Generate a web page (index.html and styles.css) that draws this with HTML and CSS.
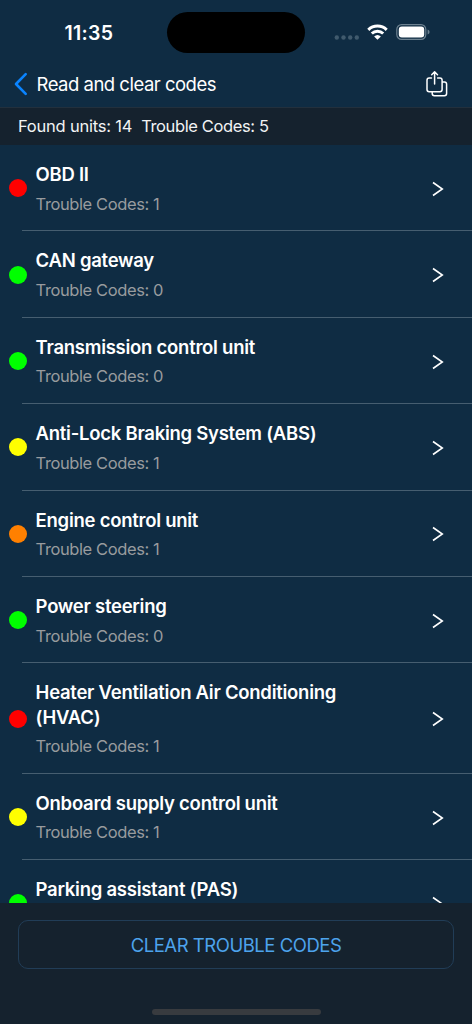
FILE: index.html
```html
<!DOCTYPE html>
<html lang="en">
<head>
<meta charset="utf-8">
<title>Read and clear codes</title>
<link rel="stylesheet" href="styles.css">
</head>
<body>
<div class="phone">
  <header class="status">
    <span class="time">11:35</span>
    <span class="island"></span>
    <svg class="indicators" width="100" height="24" viewBox="0 0 100 24">
      <g fill="#405a6d"><circle cx="5.8" cy="16.5" r="2.2"/><circle cx="12.5" cy="16.5" r="2.2"/><circle cx="19.2" cy="16.5" r="2.2"/><circle cx="25.8" cy="16.5" r="2.2"/></g>
      <g fill="none" stroke="#fff" stroke-width="3"><path d="M37.3 8.8a13.2 13.2 0 0 1 18.4 0"/><path d="M40.8 12.5a8.2 8.2 0 0 1 11.4 0"/></g>
      <path d="M43.1 15.5a5 5 0 0 1 6.8 0L46.5 18.8z" fill="#fff"/>
      <rect x="65.8" y="3.6" width="29" height="14.8" rx="4.8" fill="none" stroke="#6c8190" stroke-width="1.2"/>
      <rect x="67.8" y="5.6" width="25.4" height="10.8" rx="3" fill="#fff"/>
      <path d="M96.6 8.5q2 .6 2 2.5t-2 2.5z" fill="#6c8190"/>
    </svg>
  </header>
  <nav class="nav">
    <svg class="back" width="14" height="24" viewBox="0 0 14 24"><path d="M11.7 2.2 2 12l9.7 9.8" fill="none" stroke="#0a84ff" stroke-width="2.6" stroke-linecap="round" stroke-linejoin="round"/></svg>
    <h1 class="title">Read and clear codes</h1>
    <svg class="share" width="24" height="28" viewBox="0 0 24 28" fill="none" stroke="#fff" stroke-width="1.5" stroke-linecap="round" stroke-linejoin="round"><path d="M6.5 8H4.2Q2 8 2 10.2v9.4q0 2.2 2.2 2.2h10.7q2.2 0 2.2-2.2v-9.4Q17.1 8 14.9 8h-2.3M9.6 14V2M6.7 4.7 9.6 1.8l2.9 2.9M7.2 22v1.6q0 2.2 2.2 2.2h10q2.2 0 2.2-2.2v-9.4q0-2.2-2.2-2.2h-2.2"/></svg>
  </nav>
  <div class="summary"><span>Found units: 14</span><span class="total">Trouble Codes: 5</span></div>
  <main class="list">
    <article class="row"><i class="dot red"></i><div class="text"><h2 class="name">OBD II</h2><p class="codes">Trouble Codes: 1</p></div><svg class="chevron" viewBox="0 0 12 16"><path d="M1 1.5 10.3 8 1 14.5"/></svg></article>
    <article class="row"><i class="dot green"></i><div class="text"><h2 class="name">CAN gateway</h2><p class="codes">Trouble Codes: 0</p></div><svg class="chevron" viewBox="0 0 12 16"><path d="M1 1.5 10.3 8 1 14.5"/></svg></article>
    <article class="row"><i class="dot green"></i><div class="text"><h2 class="name">Transmission control unit</h2><p class="codes">Trouble Codes: 0</p></div><svg class="chevron" viewBox="0 0 12 16"><path d="M1 1.5 10.3 8 1 14.5"/></svg></article>
    <article class="row"><i class="dot yellow"></i><div class="text"><h2 class="name">Anti-Lock Braking System (ABS)</h2><p class="codes">Trouble Codes: 1</p></div><svg class="chevron" viewBox="0 0 12 16"><path d="M1 1.5 10.3 8 1 14.5"/></svg></article>
    <article class="row"><i class="dot orange"></i><div class="text"><h2 class="name">Engine control unit</h2><p class="codes">Trouble Codes: 1</p></div><svg class="chevron" viewBox="0 0 12 16"><path d="M1 1.5 10.3 8 1 14.5"/></svg></article>
    <article class="row"><i class="dot green"></i><div class="text"><h2 class="name">Power steering</h2><p class="codes">Trouble Codes: 0</p></div><svg class="chevron" viewBox="0 0 12 16"><path d="M1 1.5 10.3 8 1 14.5"/></svg></article>
    <article class="row"><i class="dot red"></i><div class="text"><h2 class="name">Heater Ventilation Air Conditioning<br>(HVAC)</h2><p class="codes">Trouble Codes: 1</p></div><svg class="chevron" viewBox="0 0 12 16"><path d="M1 1.5 10.3 8 1 14.5"/></svg></article>
    <article class="row"><i class="dot yellow"></i><div class="text"><h2 class="name">Onboard supply control unit</h2><p class="codes">Trouble Codes: 1</p></div><svg class="chevron" viewBox="0 0 12 16"><path d="M1 1.5 10.3 8 1 14.5"/></svg></article>
    <article class="row"><i class="dot green"></i><div class="text"><h2 class="name">Parking assistant (PAS)</h2></div><svg class="chevron" viewBox="0 0 12 16"><path d="M1 1.5 10.3 8 1 14.5"/></svg></article>
  </main>
  <footer class="footer">
    <button class="clear">CLEAR TROUBLE CODES</button>
    <span class="home"></span>
  </footer>
</div>
</body>
</html>
```
FILE: styles.css
```css
* { box-sizing: border-box; }
body { margin: 0; background: #0f2c43; color: #fff; font-family: Inter, "Liberation Sans", sans-serif; }
h1, h2, p { margin: 0; }
svg { display: block; flex: none; }
.phone { display: flex; flex-direction: column; width: 472px; height: 1024px; overflow: hidden; }
.status { display: grid; grid-template-columns: 167px 138px 1fr; height: 60px; padding-top: 12px; }
.time { padding-left: 64.5px; font-size: 19.5px; line-height: 42px; font-weight: 600; letter-spacing: .3px; }
.island { height: 41px; border-radius: 21px; background: #000; }
.indicators { margin: 9px 0 0 26px; }
.nav { display: flex; align-items: center; height: 47px; padding: 0 23px 0 14px; }
.title { flex: 1; margin-left: 8.5px; font-size: 18.5px; line-height: 24px; font-weight: 400; letter-spacing: -.5px; }
.summary { display: flex; gap: 9px; height: 38px; padding-left: 18px; border-top: 1px solid #22303d; background: #15222e; font-size: 16.5px; line-height: 37px; letter-spacing: -.22px; color: #f2f3f4; }
.total { letter-spacing: -.38px; }
.list { flex: 1; min-height: 0; overflow: hidden; }
.row { display: flex; align-items: center; min-height: 86.4px; padding: 0 28px 0 9px; background: linear-gradient(#465e70, #465e70) 22px 100% / 450px 1px no-repeat; }
.dot { flex: none; width: 18px; height: 18px; border-radius: 50%; }
.red { background: #f00; }
.green { background: #0f0; }
.yellow { background: #ff0; }
.orange { background: #ff8000; }
.text { flex: 1; align-self: flex-start; padding: 17px 0 16.5px 8.6px; }
.name { font-size: 18.5px; line-height: 24.2px; font-weight: 600; letter-spacing: -.26px; white-space: nowrap; }
.codes { margin-top: 6.5px; font-size: 16.5px; line-height: 22px; color: #989b9e; letter-spacing: -.4px; }
.chevron { width: 12px; height: 16px; margin-top: 1.4px; fill: none; stroke: #fff; stroke-width: 1.6; }
.footer { display: flex; flex-direction: column; align-items: center; height: 121px; padding-top: 17px; background: #15222e; }
.clear { width: 436px; height: 49px; padding: 0; border: 1.5px solid #213d57; border-radius: 10px; background: none; color: #4da3ec; font: 400 18.5px/46px Inter, sans-serif; letter-spacing: -.47px; }
.home { width: 169px; height: 6px; margin-top: 40px; border-radius: 3px; background: #383b3f; }
```
